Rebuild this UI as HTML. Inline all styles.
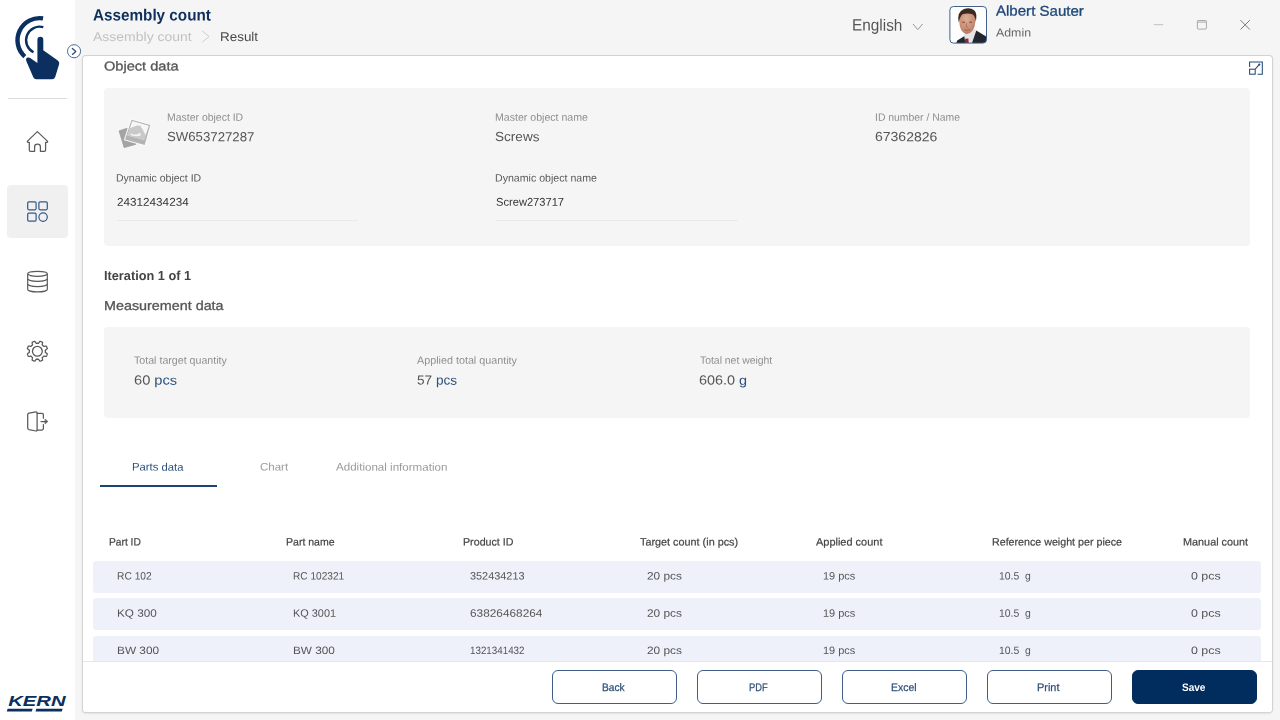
<!DOCTYPE html>
<html lang="en"><head><meta charset="utf-8"><title>Assembly count - Result</title>
<style>
html,body{margin:0;padding:0;}
body{width:1280px;height:720px;overflow:hidden;position:relative;background:#f5f5f5;font-family:'Liberation Sans', Arial, sans-serif;}
.t{position:absolute;white-space:nowrap;line-height:1;transform-origin:0 0;}
#tx{position:absolute;left:0;top:0;width:1280px;height:720px;will-change:transform;}
#side{position:absolute;left:0;top:0;width:74.5px;height:720px;background:#fff;}
#sep{position:absolute;left:8px;top:97.5px;width:59px;height:1px;background:#dcdcdc;}
#active{position:absolute;left:7px;top:185px;width:61px;height:53px;border-radius:4px;background:#f0f0f0;}
#card{position:absolute;left:83px;top:56px;width:1189px;height:656px;background:#fff;border-radius:3px;box-shadow:0 0 0 1px #d3d3d3,0 1px 3px rgba(0,0,0,.16);}
.panel{position:absolute;left:104.4px;width:1146px;background:#f5f5f5;border-radius:4px;}
.row{position:absolute;left:93px;width:1168px;height:32px;background:#eef1f9;border-radius:3px;}
.uline{position:absolute;height:1px;background:#e9e9e9;}
#footer{position:absolute;left:83px;top:661px;width:1189px;height:51px;background:#fff;border-top:1px solid #e6e6e6;border-radius:0 0 3px 3px;box-sizing:border-box;}
.btn{position:absolute;top:670px;width:125px;height:33.5px;box-sizing:border-box;border:1px solid #3f5d85;border-radius:6px;background:#fff;}
.btn.save{background:#012c5e;border-color:#012c5e;}
#tabline{position:absolute;left:100px;top:485.3px;width:116.6px;height:2px;background:#1c4474;}
svg#ico{position:absolute;left:0;top:0;}
</style></head><body>
<div id="side"><div id="sep"></div><div id="active"></div></div>
<div id="card"></div>
<div class="panel" style="top:88px;height:157.7px"></div>
<div class="panel" style="top:326.8px;height:91.2px"></div>
<div class="uline" style="left:117px;top:220px;width:241px"></div>
<div class="uline" style="left:496.25px;top:220px;width:241.25px"></div>
<div id="tabline"></div>
<div class="row" style="top:561.0px"></div><div class="row" style="top:598.0px"></div><div class="row" style="top:636.0px"></div>
<div id="footer"></div>
<div class="btn" style="left:551.5px"></div><div class="btn" style="left:696.5px"></div><div class="btn" style="left:841.5px"></div><div class="btn" style="left:986.5px"></div><div class="btn save" style="left:1131.5px"></div>
<svg id="ico" width="1280" height="720" viewBox="0 0 1280 720">
<g id="logo" fill="none" stroke="#0b2f5f">
 <path d="M43.06,18.37 A22.1,22.1 0 0 0 24.81,56.62" stroke-width="4.4"/>
 <path d="M43.32,27.22 A13.5,13.5 0 0 0 33.47,52.23" stroke-width="2.4"/>
 <path stroke="none" fill="#0b2f5f" d="M37.4,39.7 a2.95,2.95 0 0 1 5.9,0 L43.3,50.2 L57.8,60.4 Q59.9,61.9 59.1,64.3 L55.2,76.9 Q54.4,79.2 52,79.2 L36.3,79.2 Q34.2,79.2 33.3,77.2 L26.4,61.2 Q25.3,58.5 27.6,57.6 Q28.9,57.2 30.2,58.1 L37.4,62.9 Z"/>
</g>
<circle cx="74.05" cy="51.25" r="6.55" fill="#fff" stroke="#4f6b92" stroke-width="1"/>
<path d="M72.4,48.4 L75.8,51.4 L72.4,54.4" fill="none" stroke="#2f4f7f" stroke-width="1.35" stroke-linecap="round" stroke-linejoin="round"/>

<path d="M37.35,131.6 L27.5,141.1 Q26.9,142.3 28.2,142.3 L29.3,142.3 L29.3,150 Q29.3,151.3 30.6,151.3 L34.6,151.3 L34.6,146.7 Q34.6,144.2 37.5,144.2 Q40.4,144.2 40.4,146.7 L40.4,151.3 L44.3,151.3 Q45.6,151.3 45.6,150 L45.6,142.3 L46.8,142.3 Q48.1,142.3 47.4,141.1 Z" fill="none" stroke="#5a5a5a" stroke-width="1.25" stroke-linejoin="round"/>

<g fill="none" stroke="#335886" stroke-width="1.2">
 <rect x="27.7" y="201.9" width="8.4" height="7.9" rx="1.2"/>
 <rect x="38.9" y="201.9" width="8.4" height="7.9" rx="1.2"/>
 <rect x="27.7" y="213.1" width="8.4" height="8.0" rx="1.2"/>
 <circle cx="43.1" cy="217.1" r="4.2"/>
</g>

<g fill="none" stroke="#5a5a5a" stroke-width="1.2">
 <ellipse cx="37.5" cy="273.8" rx="9.8" ry="2.5"/>
 <path d="M27.7,273.8 V289.4 A9.8,2.5 0 0 0 47.3,289.4 V273.8"/>
 <path d="M27.7,278.8 A9.8,2.5 0 0 0 47.3,278.8"/>
 <path d="M27.7,284.1 A9.8,2.5 0 0 0 47.3,284.1"/>
</g>

<g fill="none" stroke="#5a5a5a" stroke-width="1.3" stroke-linejoin="round">
 <path d="M45.35,351.25 L45.35,351.51 L45.33,351.77 L45.31,352.03 L45.28,352.29 L45.73,352.63 L46.32,353.04 L46.90,353.48 L47.30,353.92 L47.21,354.24 L47.10,354.56 L46.99,354.88 L46.87,355.19 L46.73,355.50 L46.59,355.81 L46.43,356.11 L46.27,356.40 L45.68,356.43 L44.96,356.33 L44.26,356.20 L43.70,356.12 L43.53,356.33 L43.36,356.52 L43.19,356.72 L43.01,356.91 L42.82,357.09 L42.62,357.26 L42.43,357.43 L42.22,357.60 L42.30,358.16 L42.43,358.86 L42.53,359.58 L42.50,360.17 L42.21,360.33 L41.91,360.49 L41.60,360.63 L41.29,360.77 L40.98,360.89 L40.66,361.00 L40.34,361.11 L40.02,361.20 L39.58,360.80 L39.14,360.22 L38.73,359.63 L38.39,359.18 L38.13,359.21 L37.87,359.23 L37.61,359.25 L37.35,359.25 L37.09,359.25 L36.83,359.23 L36.57,359.21 L36.31,359.18 L35.97,359.63 L35.56,360.22 L35.12,360.80 L34.68,361.20 L34.36,361.11 L34.04,361.00 L33.72,360.89 L33.41,360.77 L33.10,360.63 L32.79,360.49 L32.49,360.33 L32.20,360.17 L32.17,359.58 L32.27,358.86 L32.40,358.16 L32.48,357.60 L32.27,357.43 L32.08,357.26 L31.88,357.09 L31.69,356.91 L31.51,356.72 L31.34,356.52 L31.17,356.33 L31.00,356.12 L30.44,356.20 L29.74,356.33 L29.02,356.43 L28.43,356.40 L28.27,356.11 L28.11,355.81 L27.97,355.50 L27.83,355.19 L27.71,354.88 L27.60,354.56 L27.49,354.24 L27.40,353.92 L27.80,353.48 L28.38,353.04 L28.97,352.63 L29.42,352.29 L29.39,352.03 L29.37,351.77 L29.35,351.51 L29.35,351.25 L29.35,350.99 L29.37,350.73 L29.39,350.47 L29.42,350.21 L28.97,349.87 L28.38,349.46 L27.80,349.02 L27.40,348.58 L27.49,348.26 L27.60,347.94 L27.71,347.62 L27.83,347.31 L27.97,347.00 L28.11,346.69 L28.27,346.39 L28.43,346.10 L29.02,346.07 L29.74,346.17 L30.44,346.30 L31.00,346.38 L31.17,346.17 L31.34,345.98 L31.51,345.78 L31.69,345.59 L31.88,345.41 L32.08,345.24 L32.27,345.07 L32.48,344.90 L32.40,344.34 L32.27,343.64 L32.17,342.92 L32.20,342.33 L32.49,342.17 L32.79,342.01 L33.10,341.87 L33.41,341.73 L33.72,341.61 L34.04,341.50 L34.36,341.39 L34.68,341.30 L35.12,341.70 L35.56,342.28 L35.97,342.87 L36.31,343.32 L36.57,343.29 L36.83,343.27 L37.09,343.25 L37.35,343.25 L37.61,343.25 L37.87,343.27 L38.13,343.29 L38.39,343.32 L38.73,342.87 L39.14,342.28 L39.58,341.70 L40.02,341.30 L40.34,341.39 L40.66,341.50 L40.98,341.61 L41.29,341.73 L41.60,341.87 L41.91,342.01 L42.21,342.17 L42.50,342.33 L42.53,342.92 L42.43,343.64 L42.30,344.34 L42.22,344.90 L42.43,345.07 L42.62,345.24 L42.82,345.41 L43.01,345.59 L43.19,345.78 L43.36,345.98 L43.53,346.17 L43.70,346.38 L44.26,346.30 L44.96,346.17 L45.68,346.07 L46.27,346.10 L46.43,346.39 L46.59,346.69 L46.73,347.00 L46.87,347.31 L46.99,347.62 L47.10,347.94 L47.21,348.26 L47.30,348.58 L46.90,349.02 L46.32,349.46 L45.73,349.87 L45.28,350.21 L45.31,350.47 L45.33,350.73 L45.35,350.99 L45.35,351.25Z"/>
 <circle cx="37.35" cy="351.25" r="4.9"/>
</g>

<g fill="none" stroke="#5a5a5a" stroke-width="1.25" stroke-linejoin="round" stroke-linecap="round">
 <path d="M28.9,413.2 L36,411.9 Q37.1,411.8 37.1,412.9 L37.1,430 Q37.1,431.1 36,431 L28.9,429.6 Q27.7,429.3 27.7,428.1 L27.7,414.7 Q27.7,413.5 28.9,413.2 Z"/>
 <path d="M37.1,413.4 L42,413.4 Q43.4,413.4 43.4,414.8 L43.4,418.2 M43.4,424.6 L43.4,428.6 Q43.4,430 42,430 L37.1,430"/>
 <path d="M41,421.5 L46,421.5"/>
 <path d="M45.3,419.3 L47.9,421.5 L45.3,423.7 Z" fill="#5a5a5a" stroke-width="0.6"/>
</g>

<text x="8.2" y="705.8" font-family="'Liberation Sans',Arial,sans-serif" font-size="14.1" font-weight="bold" font-style="italic" fill="#0b2f5f" textLength="57.4" lengthAdjust="spacingAndGlyphs">KERN</text>
<path d="M7.6,708.8 H32.6 L31.8,711.4 H6.8 Z M36.3,708.8 H62.6 L61.8,711.4 H35.5 Z" fill="#0b2f5f"/>

<path d="M202.2,30.9 L209.1,36.55 L202.2,42.2" fill="none" stroke="#c8c8c8" stroke-width="0.9"/>
<path d="M912.9,23.9 L917.8,29.6 L922.7,23.9" fill="none" stroke="#8a8a8a" stroke-width="0.9"/>
<g id="avatar">
 <defs>
  <clipPath id="avc"><rect x="949.9" y="6.5" width="36.6" height="36.6" rx="3.6"/></clipPath>
  <filter id="avb" x="-10%" y="-10%" width="120%" height="120%"><feGaussianBlur stdDeviation="0.55"/></filter>
  <radialGradient id="skin" cx="0.45" cy="0.35" r="0.75"><stop offset="0" stop-color="#dcae94"/><stop offset="0.6" stop-color="#c98e74"/><stop offset="1" stop-color="#a8705a"/></radialGradient>
 </defs>
 <rect x="949.9" y="6.5" width="36.6" height="36.6" rx="3.6" fill="#fefefe"/>
 <g clip-path="url(#avc)"><g filter="url(#avb)">
  <path d="M955.5,45 L957.2,40.6 L964.6,36 L970,40 L976.3,30.4 L985.8,36.3 L988,39 V45 Z" fill="#23252f"/>
  <path d="M964.2,35.2 L965.5,44.5 L971.5,44.5 L976.3,30.6 L973.5,28 L965,31.5 Z" fill="#e6e4e6"/>
  <path d="M965.2,38.8 L968.4,38.6 L968.9,45 L964.6,45 Z" fill="#8a2a30"/>
  <path d="M959.2,21 Q958.6,14 962.5,11.5 Q967.5,9 972.5,11.8 Q976,14.5 975.4,21.5 Q975.2,27 972.2,31 Q969.5,34.2 966.6,34 Q963.2,33.4 961,29.5 Q959.4,26 959.2,21 Z" fill="url(#skin)"/>
  <path d="M958.7,22.6 Q956.6,11.8 964,9 Q970,7.2 974.4,10.4 Q977.4,13.2 975.8,21.6 Q975.2,16.4 973,14.4 Q967,12.6 962,14.6 Q959.6,17.4 958.7,22.6 Z" fill="#3a2922"/>
  <ellipse cx="963.6" cy="22.3" rx="1.7" ry="0.8" fill="#6e4536" opacity="0.75"/>
  <ellipse cx="970.6" cy="22.3" rx="1.7" ry="0.8" fill="#6e4536" opacity="0.75"/>
  <path d="M966.6,23 L966,27 L968.2,27.2" fill="none" stroke="#a56c57" stroke-width="0.8"/>
  <path d="M964.4,29.6 Q967,30.9 969.8,29.5" fill="none" stroke="#9c5b4e" stroke-width="0.9"/>
 </g></g>
 <rect x="949.9" y="6.5" width="36.6" height="36.6" rx="3.6" fill="none" stroke="#41618c" stroke-width="1"/>
</g>
<g id="winctl" fill="none">
 <path d="M1153.8,24.7 H1163.3" stroke="#c0c0c0" stroke-width="1"/>
 <rect x="1197.4" y="20.5" width="9" height="8.6" rx="0.8" stroke="#a0a0a0" stroke-width="0.9"/>
 <path d="M1197.4,22.1 H1206.4" stroke="#a0a0a0" stroke-width="0.9"/>
 <path d="M1240.5,20.2 L1249.8,29.5 M1249.8,20.2 L1240.5,29.5" stroke="#6a6a6a" stroke-width="0.9"/>
</g>
<g id="expand" fill="none" stroke="#234877" stroke-width="1.05">
 <path d="M1249.6,67 V61.9 H1262.3 V74.2 H1257.6"/>
 <rect x="1249.6" y="69.2" width="5.6" height="5" />
 <path d="M1255.4,68.9 L1259,64.9"/>
 <circle cx="1259.3" cy="64.6" r="1.1" fill="#234877" stroke="none"/>
</g>

<g id="photo">
 <path d="M119.1,130.9 L127.2,128.2 L136,144.2 L124.2,147.6 Z" fill="#a3a3a3" stroke="#a3a3a3" stroke-width="0.9" stroke-linejoin="round"/>
 <path d="M130.9,118.75 L151.25,124.4 L145.3,145.9 L124.1,140 Z" fill="#fafafa" stroke="#fafafa" stroke-width="0.5" stroke-linejoin="round"/>
 <path d="M131.6,119.7 L150.3,124.9 L144.7,145 L125,139.4 Z" fill="#b3b3b3"/>
 <path d="M132.31,121.03 L148.89,125.64 L144.07,140.03 L127.49,135.42Z" fill="#f7f7f7"/>
 <path d="M129.90,128.23 L132.94,127.00 L136.50,125.82 L138.52,125.14 L139.17,126.35 L140.38,125.24 L141.23,127.13 L142.87,129.76 L144.36,132.87 L145.66,135.30 L144.07,140.03 L127.49,135.42Z" fill="#c9c9c9"/>
 <path d="M130.63,133.61 L134.16,134.38 L137.66,134.32 L139.23,133.10 L141.03,134.01 L140.27,135.66 L137.19,136.36 L132.69,135.63 L130.25,134.74Z" fill="#f4f4f4"/>
</g>
</svg>
<div id="tx">
<div class="t" style="left:92.73px;top:6px;font-size:16.3px;font-weight:bold;color:#0f2f5c;transform:translateY(0.50px) rotate(0.05deg) scaleX(0.9376);">Assembly count</div>
<div class="t" style="left:93.20px;top:30px;font-size:12.7px;font-weight:normal;color:#c2c2c2;transform:translateY(0.90px) rotate(0.05deg) scaleX(1.1028);">Assembly count</div>
<div class="t" style="left:219.94px;top:30px;font-size:12.7px;font-weight:normal;color:#484848;transform:translateY(0.90px) rotate(0.05deg) scaleX(1.0590);">Result</div>
<div class="t" style="left:852.43px;top:16px;font-size:16.4px;font-weight:normal;color:#555;transform:translateY(0.60px) rotate(0.05deg) scaleX(0.9379);">English</div>
<div class="t" style="left:995.60px;top:3px;font-size:14.2px;font-weight:normal;color:#1f4778;-webkit-text-stroke:0.3px #1f4778;transform:translateY(0.60px) rotate(0.05deg) scaleX(1.0610);">Albert Sauter</div>
<div class="t" style="left:995.60px;top:27px;font-size:11.5px;font-weight:normal;color:#666;transform:translateY(0.60px) rotate(0.05deg) scaleX(1.0740);">Admin</div>
<div class="t" style="left:104.04px;top:59px;font-size:13.0px;font-weight:normal;color:#555;-webkit-text-stroke:0.3px #555;transform:translateY(0.40px) rotate(0.05deg) scaleX(1.1215);">Object data</div>
<div class="t" style="left:167.05px;top:111px;font-size:10.5px;font-weight:normal;color:#8f8f8f;transform:translateY(0.70px) rotate(0.05deg) scaleX(0.9967);">Master object ID</div>
<div class="t" style="left:167.04px;top:130px;font-size:13.1px;font-weight:normal;color:#555;transform:translateY(0.10px) rotate(0.05deg) scaleX(1.0088);">SW653727287</div>
<div class="t" style="left:495.49px;top:111px;font-size:10.5px;font-weight:normal;color:#8f8f8f;transform:translateY(0.70px) rotate(0.05deg) scaleX(1.0082);">Master object name</div>
<div class="t" style="left:495.47px;top:130px;font-size:13.1px;font-weight:normal;color:#555;transform:translateY(0.10px) rotate(0.05deg) scaleX(1.0359);">Screws</div>
<div class="t" style="left:874.61px;top:111px;font-size:10.5px;font-weight:normal;color:#8f8f8f;transform:translateY(0.70px) rotate(0.05deg) scaleX(0.9911);">ID number / Name</div>
<div class="t" style="left:874.80px;top:130px;font-size:13.1px;font-weight:normal;color:#555;transform:translateY(0.10px) rotate(0.05deg) scaleX(1.0702);">67362826</div>
<div class="t" style="left:116.15px;top:172px;font-size:10.5px;font-weight:normal;color:#5a5a5a;transform:translateY(0.40px) rotate(0.05deg) scaleX(1.0000);">Dynamic object ID</div>
<div class="t" style="left:116.58px;top:196px;font-size:11.3px;font-weight:normal;color:#333;transform:translateY(0.80px) rotate(0.05deg) scaleX(1.0374);">24312434234</div>
<div class="t" style="left:495.49px;top:172px;font-size:10.5px;font-weight:normal;color:#5a5a5a;transform:translateY(0.40px) rotate(0.05deg) scaleX(1.0100);">Dynamic object name</div>
<div class="t" style="left:495.76px;top:196px;font-size:11.3px;font-weight:normal;color:#333;transform:translateY(0.80px) rotate(0.05deg) scaleX(0.9853);">Screw273717</div>
<div class="t" style="left:103.72px;top:269px;font-size:13.0px;font-weight:bold;color:#444;transform:translateY(0.00px) rotate(0.05deg) scaleX(0.9806);">Iteration 1 of 1</div>
<div class="t" style="left:103.70px;top:299px;font-size:13.0px;font-weight:normal;color:#555;-webkit-text-stroke:0.3px #555;transform:translateY(0.00px) rotate(0.05deg) scaleX(1.1033);">Measurement data</div>
<div class="t" style="left:134.15px;top:354px;font-size:10.5px;font-weight:normal;color:#8f8f8f;transform:translateY(0.80px) rotate(0.05deg) scaleX(1.0137);">Total target quantity</div>
<div class="t" style="left:417.20px;top:354px;font-size:10.5px;font-weight:normal;color:#8f8f8f;transform:translateY(0.80px) rotate(0.05deg) scaleX(1.0256);">Applied total quantity</div>
<div class="t" style="left:699.75px;top:354px;font-size:10.5px;font-weight:normal;color:#8f8f8f;transform:translateY(0.80px) rotate(0.05deg) scaleX(0.9897);">Total net weight</div>
<div class="t" style="left:131.76px;top:461px;font-size:10.9px;font-weight:normal;color:#2c4f7c;transform:translateY(0.60px) rotate(0.05deg) scaleX(1.0371);">Parts data</div>
<div class="t" style="left:260.37px;top:461px;font-size:10.9px;font-weight:normal;color:#9a9a9a;transform:translateY(0.60px) rotate(0.05deg) scaleX(1.0577);">Chart</div>
<div class="t" style="left:336.25px;top:461px;font-size:10.9px;font-weight:normal;color:#9a9a9a;transform:translateY(0.60px) rotate(0.05deg) scaleX(1.0635);">Additional information</div>
<div class="t" style="left:109.47px;top:536px;font-size:10.6px;font-weight:normal;color:#444;-webkit-text-stroke:0.2px #444;transform:translateY(0.40px) rotate(0.05deg) scaleX(0.9669);">Part ID</div>
<div class="t" style="left:285.50px;top:536px;font-size:10.6px;font-weight:normal;color:#444;-webkit-text-stroke:0.2px #444;transform:translateY(0.40px) rotate(0.05deg) scaleX(0.9948);">Part name</div>
<div class="t" style="left:462.64px;top:536px;font-size:10.6px;font-weight:normal;color:#444;-webkit-text-stroke:0.2px #444;transform:translateY(0.40px) rotate(0.05deg) scaleX(1.0092);">Product ID</div>
<div class="t" style="left:639.84px;top:536px;font-size:10.6px;font-weight:normal;color:#444;-webkit-text-stroke:0.2px #444;transform:translateY(0.40px) rotate(0.05deg) scaleX(1.0226);">Target count (in pcs)</div>
<div class="t" style="left:816.20px;top:536px;font-size:10.6px;font-weight:normal;color:#444;-webkit-text-stroke:0.2px #444;transform:translateY(0.40px) rotate(0.05deg) scaleX(1.0350);">Applied count</div>
<div class="t" style="left:991.74px;top:536px;font-size:10.6px;font-weight:normal;color:#444;-webkit-text-stroke:0.2px #444;transform:translateY(0.40px) rotate(0.05deg) scaleX(1.0078);">Reference weight per piece</div>
<div class="t" style="left:1182.98px;top:536px;font-size:10.6px;font-weight:normal;color:#444;-webkit-text-stroke:0.2px #444;transform:translateY(0.40px) rotate(0.05deg) scaleX(1.0239);">Manual count</div>
<div class="t" style="left:116.84px;top:570px;font-size:10.7px;font-weight:normal;color:#555;transform:translateY(0.40px) rotate(0.05deg) scaleX(0.9583);">RC 102</div>
<div class="t" style="left:293.35px;top:570px;font-size:10.7px;font-weight:normal;color:#555;transform:translateY(0.40px) rotate(0.05deg) scaleX(0.9476);">RC 102321</div>
<div class="t" style="left:470.09px;top:570px;font-size:10.7px;font-weight:normal;color:#555;transform:translateY(0.40px) rotate(0.05deg) scaleX(1.0190);">352434213</div>
<div class="t" style="left:646.75px;top:570px;font-size:10.7px;font-weight:normal;color:#555;transform:translateY(0.40px) rotate(0.05deg) scaleX(1.1082);">20 pcs</div>
<div class="t" style="left:822.63px;top:570px;font-size:10.7px;font-weight:normal;color:#555;transform:translateY(0.40px) rotate(0.05deg) scaleX(1.0248);">19 pcs</div>
<div class="t" style="left:999.27px;top:570px;font-size:10.7px;font-weight:normal;color:#555;transform:translateY(0.40px) rotate(0.05deg) scaleX(0.9760);">10.5  g</div>
<div class="t" style="left:1190.67px;top:570px;font-size:10.7px;font-weight:normal;color:#555;transform:translateY(0.40px) rotate(0.05deg) scaleX(1.1616);">0 pcs</div>
<div class="t" style="left:116.70px;top:607px;font-size:10.7px;font-weight:normal;color:#555;transform:translateY(0.70px) rotate(0.05deg) scaleX(1.1007);">KQ 300</div>
<div class="t" style="left:293.28px;top:607px;font-size:10.7px;font-weight:normal;color:#555;transform:translateY(0.70px) rotate(0.05deg) scaleX(1.0209);">KQ 3001</div>
<div class="t" style="left:470.05px;top:607px;font-size:10.7px;font-weight:normal;color:#555;transform:translateY(0.70px) rotate(0.05deg) scaleX(1.1070);">63826468264</div>
<div class="t" style="left:646.75px;top:607px;font-size:10.7px;font-weight:normal;color:#555;transform:translateY(0.70px) rotate(0.05deg) scaleX(1.1082);">20 pcs</div>
<div class="t" style="left:822.63px;top:607px;font-size:10.7px;font-weight:normal;color:#555;transform:translateY(0.70px) rotate(0.05deg) scaleX(1.0248);">19 pcs</div>
<div class="t" style="left:999.27px;top:607px;font-size:10.7px;font-weight:normal;color:#555;transform:translateY(0.70px) rotate(0.05deg) scaleX(0.9760);">10.5  g</div>
<div class="t" style="left:1190.67px;top:607px;font-size:10.7px;font-weight:normal;color:#555;transform:translateY(0.70px) rotate(0.05deg) scaleX(1.1616);">0 pcs</div>
<div class="t" style="left:116.69px;top:645px;font-size:10.7px;font-weight:normal;color:#555;transform:translateY(0.00px) rotate(0.05deg) scaleX(1.1068);">BW 300</div>
<div class="t" style="left:293.20px;top:645px;font-size:10.7px;font-weight:normal;color:#555;transform:translateY(0.00px) rotate(0.05deg) scaleX(1.1014);">BW 300</div>
<div class="t" style="left:469.91px;top:645px;font-size:10.7px;font-weight:normal;color:#555;transform:translateY(0.00px) rotate(0.05deg) scaleX(0.9167);">1321341432</div>
<div class="t" style="left:646.75px;top:645px;font-size:10.7px;font-weight:normal;color:#555;transform:translateY(0.00px) rotate(0.05deg) scaleX(1.1082);">20 pcs</div>
<div class="t" style="left:822.63px;top:645px;font-size:10.7px;font-weight:normal;color:#555;transform:translateY(0.00px) rotate(0.05deg) scaleX(1.0248);">19 pcs</div>
<div class="t" style="left:999.27px;top:645px;font-size:10.7px;font-weight:normal;color:#555;transform:translateY(0.00px) rotate(0.05deg) scaleX(0.9760);">10.5  g</div>
<div class="t" style="left:1190.67px;top:645px;font-size:10.7px;font-weight:normal;color:#555;transform:translateY(0.00px) rotate(0.05deg) scaleX(1.1616);">0 pcs</div>
<div class="t" style="left:133.56px;top:373px;font-size:13.1px;color:#555;transform:translateY(0.60px) rotate(0.05deg) scaleX(1.1195);">60 <span style="color:#2c4f7c">pcs</span></div>
<div class="t" style="left:416.68px;top:373px;font-size:13.1px;color:#555;transform:translateY(0.60px) rotate(0.05deg) scaleX(1.0400);">57 <span style="color:#2c4f7c">pcs</span></div>
<div class="t" style="left:699.17px;top:373px;font-size:13.1px;color:#555;transform:translateY(0.60px) rotate(0.05deg) scaleX(1.1012);">606.0 <span style="color:#2c4f7c">g</span></div>
<div class="t" style="left:602.30px;top:681px;font-size:10.9px;font-weight:normal;color:#2f5078;-webkit-text-stroke:0.25px #2f5078;transform:translateY(0.90px) rotate(0.05deg) scaleX(0.9362);">Back</div>
<div class="t" style="left:749.46px;top:681px;font-size:10.9px;font-weight:normal;color:#2f5078;-webkit-text-stroke:0.25px #2f5078;transform:translateY(0.90px) rotate(0.05deg) scaleX(0.8578);">PDF</div>
<div class="t" style="left:891.18px;top:681px;font-size:10.9px;font-weight:normal;color:#2f5078;-webkit-text-stroke:0.25px #2f5078;transform:translateY(0.90px) rotate(0.05deg) scaleX(0.9584);">Excel</div>
<div class="t" style="left:1037.35px;top:681px;font-size:10.9px;font-weight:normal;color:#2f5078;-webkit-text-stroke:0.25px #2f5078;transform:translateY(0.90px) rotate(0.05deg) scaleX(1.0023);">Print</div>
<div class="t" style="left:1182.24px;top:681px;font-size:10.9px;font-weight:bold;color:#fff;transform:translateY(0.90px) rotate(0.05deg) scaleX(0.9224);">Save</div>
</div>
</body></html>
